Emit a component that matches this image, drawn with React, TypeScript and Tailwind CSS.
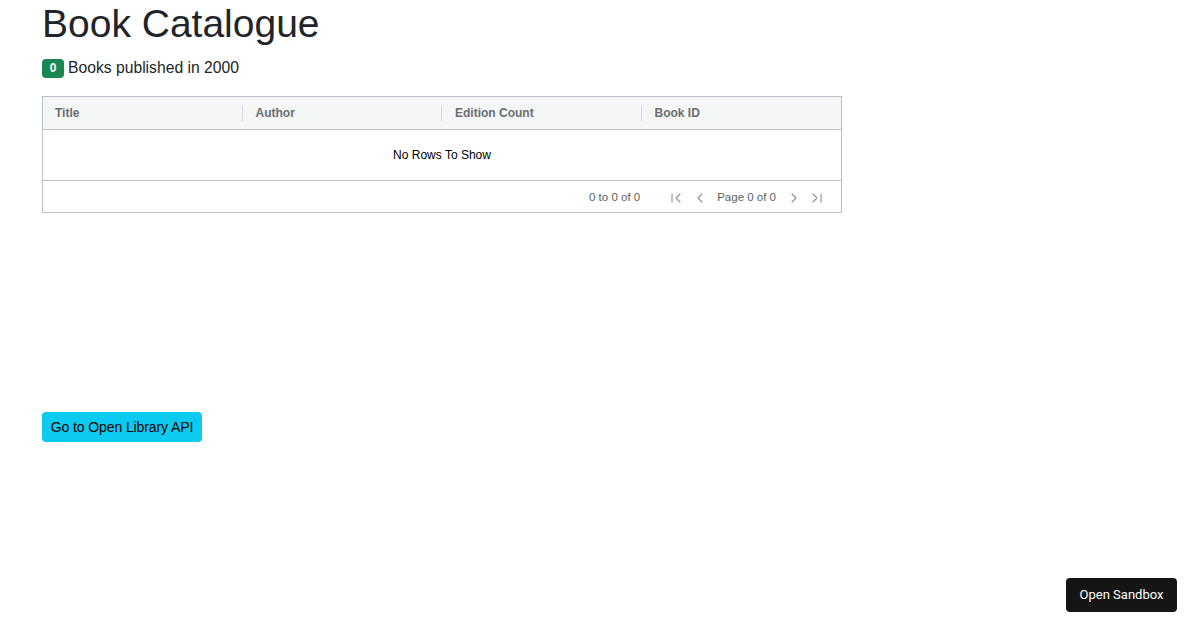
import React from "react";

const headers = ["Title", "Author", "Edition Count", "Book ID"];

function Icon({ d, w }: { d: string; w: number }) {
  return (
    <svg width={w} height="12" viewBox={`0 0 ${w} 12`} fill="none" stroke="#8c9196" strokeWidth="1.1" strokeLinecap="round" strokeLinejoin="round">
      <path d={d} />
    </svg>
  );
}

export default function App() {
  return (
    <div className="min-h-[630px] bg-white px-[42px] text-[#212529]" style={{ fontFamily: '"Liberation Sans", Arial, sans-serif' }}>
      <h1 className="text-[39px] leading-[48px] font-normal mb-2">Book Catalogue</h1>
      <p className="flex items-center gap-1 text-[15.7px] leading-6 mb-4">
        <span className="inline-flex items-center justify-center w-[22px] h-[19px] rounded-[4px] bg-[#198754] text-white text-[12px] font-bold">0</span>
        <span>Books published in 2000</span>
      </p>
      <div className="h-[300px] w-[800px]">
        <div className="border border-[#babfc7] text-[12px]">
          <div className="flex h-[33px] bg-[#f5f7f7] border-b border-[#babfc7] text-[#6a6d70] font-bold text-[12px]">
            {headers.map((h, i) => (
              <div key={h} className={i > 0 ? "relative flex items-center w-[200px] pl-[13px] pr-3" : "relative flex items-center w-[200px] px-3"}>
                {i > 0 && <span className="absolute left-[-1px] top-[9px] h-[15px] w-px bg-[#d5dae2]" />}
                {h}
              </div>
            ))}
          </div>
          <div className="h-[50px] flex items-center justify-center text-black">No Rows To Show</div>
          <div className="h-[32px] border-t border-[#babfc7] flex items-center justify-end text-[#5c5f62] text-[11.5px] pr-[19px] pt-[2px]">
            <span className="mr-[31px]">0 to 0 of 0</span>
            <Icon w={10} d="M1 2v8M9 2L5 6l4 4" />
            <span className="w-[15px]" />
            <Icon w={8} d="M6 2L2 6l4 4" />
            <span className="w-[13px]" />
            <span>Page 0 of 0</span>
            <span className="w-[14px]" />
            <Icon w={7} d="M2 2l4 4-4 4" />
            <span className="w-[15px]" />
            <Icon w={10} d="M1 2l4 4-4 4M9 2v8" />
          </div>
        </div>
      </div>
      <button className="mt-4 h-[30px] w-[160px] flex items-center justify-center rounded-[4px] bg-[#0dcaf0] text-black text-[14px] tracking-[-0.1px]">Go to Open Library API</button>
      <div className="fixed right-[23px] bottom-[18px] h-[34px] w-[111px] flex items-center justify-center rounded-[4px] bg-[#151515] text-white text-[13px]" style={{ fontFamily: 'Roboto, "Liberation Sans", sans-serif' }}>
        Open Sandbox
      </div>
    </div>
  );
}
